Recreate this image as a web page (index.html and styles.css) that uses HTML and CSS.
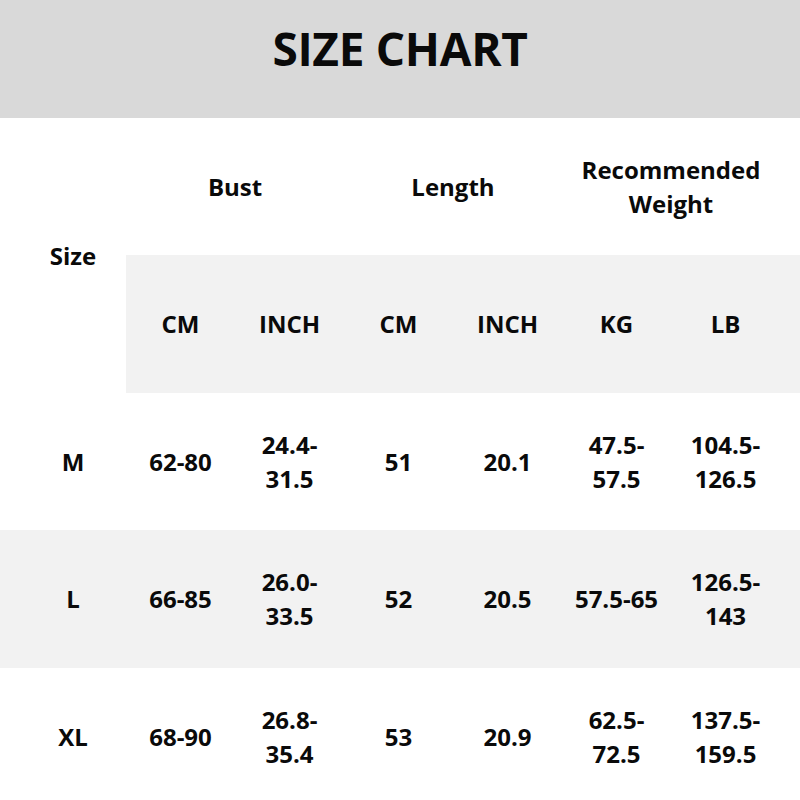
FILE: index.html
```html
<!DOCTYPE html>
<html lang="en">
<head>
<meta charset="utf-8">
<title>Size Chart</title>
<link rel="stylesheet" href="styles.css">
</head>
<body>
<div class="page">
  <div class="banner"><h1 class="title">SIZE CHART</h1></div>
  <div class="chart">
    <div class="cell size-head">Size</div>
    <div class="cell group">Bust</div>
    <div class="cell group">Length</div>
    <div class="cell group">Recommended<br>Weight</div>
    <div class="cell fill"></div>

    <div class="cell sub">CM</div>
    <div class="cell sub">INCH</div>
    <div class="cell sub">CM</div>
    <div class="cell sub">INCH</div>
    <div class="cell sub">KG</div>
    <div class="cell sub">LB</div>
    <div class="cell sub"></div>

    <div class="cell label">M</div>
    <div class="cell">62-80</div>
    <div class="cell">24.4-<br>31.5</div>
    <div class="cell">51</div>
    <div class="cell">20.1</div>
    <div class="cell">47.5-<br>57.5</div>
    <div class="cell">104.5-<br>126.5</div>
    <div class="cell"></div>

    <div class="cell label alt">L</div>
    <div class="cell alt">66-85</div>
    <div class="cell alt">26.0-<br>33.5</div>
    <div class="cell alt">52</div>
    <div class="cell alt">20.5</div>
    <div class="cell alt">57.5-65</div>
    <div class="cell alt">126.5-<br>143</div>
    <div class="cell alt"></div>

    <div class="cell label">XL</div>
    <div class="cell">68-90</div>
    <div class="cell">26.8-<br>35.4</div>
    <div class="cell">53</div>
    <div class="cell">20.9</div>
    <div class="cell">62.5-<br>72.5</div>
    <div class="cell">137.5-<br>159.5</div>
    <div class="cell"></div>
  </div>
</div>
</body>
</html>
```

FILE: styles.css
```css
html, body {
  margin: 0;
  padding: 0;
  background: #ffffff;
}

.page {
  width: 800px;
  height: 800px;
  overflow: hidden;
  font-family: "Open Sans", "Noto Sans", "Liberation Sans", sans-serif;
  font-weight: 700;
  color: #0a0a0a;
}

.banner {
  height: 118px;
  background: #d9d9d9;
  display: flex;
  align-items: center;
  justify-content: center;
}

.title {
  margin: 0;
  font-size: 46px;
  font-weight: 700;
  line-height: 1;
  padding-bottom: 22px;
  letter-spacing: -0.3px;
}

.chart {
  display: grid;
  grid-template-columns: 126px repeat(6, 109px) 1fr;
  grid-template-rows: 137px 138px 137px 138px 137px;
  font-size: 24px;
  line-height: 34px;
}

.cell {
  display: flex;
  align-items: center;
  justify-content: center;
  text-align: center;
}

.size-head {
  grid-row: span 2;
  padding-left: 20px;
  padding-top: 1px;
}

.label {
  padding-left: 20px;
}

.group {
  grid-column: span 2;
}

.sub {
  background: #f2f2f2;
}

.alt {
  background: #f2f2f2;
}
```
